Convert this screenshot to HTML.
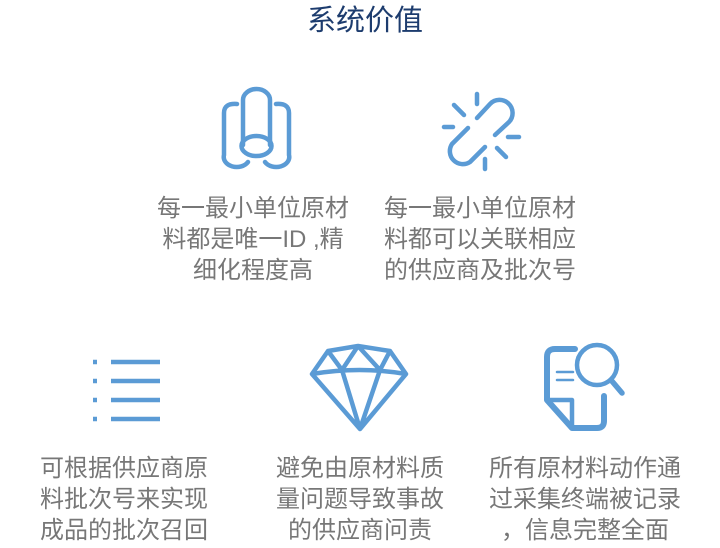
<!DOCTYPE html><html><head><meta charset="utf-8"><style>
body{margin:0;width:720px;height:548px;background:#fff;overflow:hidden;position:relative;font-family:"Liberation Sans","Noto Sans CJK SC",sans-serif}
.t{position:absolute;top:-3px;left:0;width:730px;text-align:center;font-size:29px;color:#1d3c6e}
.p{position:absolute;font-size:24px;line-height:31px;color:#777;text-align:center;white-space:nowrap}
svg{position:absolute;left:0;top:0}
</style></head><body>
<div class="t">系统价值</div>
<svg width="720" height="548" fill="none" stroke="#5b9bd5" stroke-width="4.5" stroke-linecap="round" stroke-linejoin="round">
<!-- pipes -->
<path d="M243 145 V100 A13.5 11 0 0 1 270 100 V145"/>
<ellipse cx="256.5" cy="146" rx="15" ry="10"/>
<path d="M237 104 Q224 103 224 113 V155 A13 10 0 0 0 248 162"/>
<path d="M276 104 Q289 103 289 113 V155 A13 10 0 0 1 265 162"/>
<!-- link -->
<path d="M477 118 L490 104 A13 13 0 0 1 509 122 L495 135"/>
<path d="M468 128 L452 144 A13 13 0 0 0 470 162 L485 147"/>
<path d="M477 94 V104 M454 105 L464 115 M444 127 H453 M508 137 H519 M497 148 L506 157 M485 159 V169"/>
<!-- list -->
<g stroke-width="4.5" stroke-linecap="butt"><path d="M93 362 H97 M111 362 H160 M93 381 H97 M111 381 H160 M93 400 H97 M111 400 H160 M93 419 H97 M111 419 H160"/></g>
<!-- diamond -->
<g stroke-width="4.5"><path d="M328 351 L358 346 L390 351 L406 374 L360 429 L312 374 Z M312 374 Q360 366 406 374 M328 351 L342 370 L358 346 L380 370 L390 351 M342 370 L360 429 L380 370"/></g>
<!-- doc -->
<path d="M575 349 H555 Q547 349 547 357 V400 L572 428 H597 Q604 428 604 421 V396" stroke-width="6"/>
<path d="M547 400 H572 V428" stroke-width="4.5"/>
<path d="M557 372 H573 M557 380 H573" stroke-width="2.5"/>
<circle cx="597" cy="365" r="20"/>
<path d="M611 380 L622 393" stroke-width="5.5"/>
</svg>
<div class="p" style="left:153px;top:193px;width:200px">每一最小单位原材<br>料都是唯一ID ,精<br>细化程度高</div>
<div class="p" style="left:384px;top:193px;width:200px;text-align:left">每一最小单位原材<br>料都可以关联相应<br>的供应商及批次号</div>
<div class="p" style="left:24px;top:453px;width:200px">可根据供应商原<br>料批次号来实现<br>成品的批次召回</div>
<div class="p" style="left:260px;top:453px;width:200px">避免由原材料质<br>量问题导致事故<br>的供应商问责</div>
<div class="p" style="left:485px;top:453px;width:200px">所有原材料动作通<br>过采集终端被记录<br>，信息完整全面</div>
</body></html>
